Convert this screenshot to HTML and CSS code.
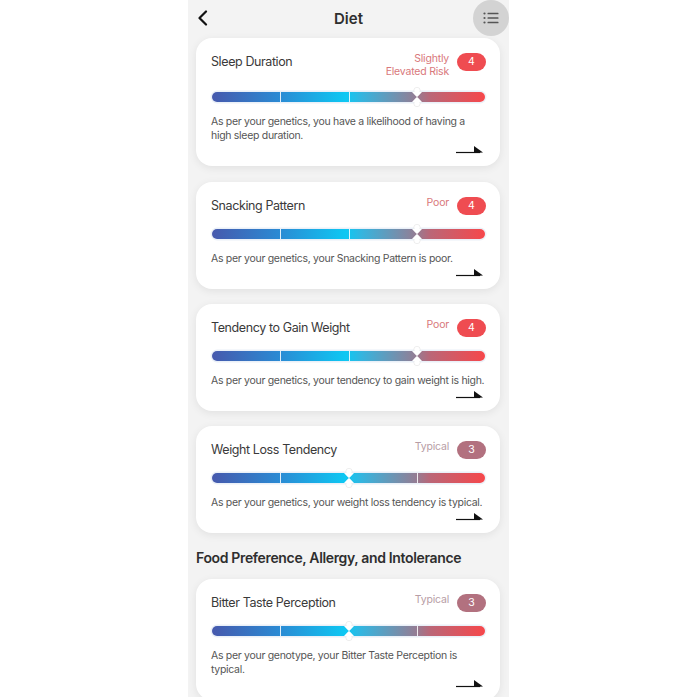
FILE: index.html
```html
<!DOCTYPE html>
<html>
<head>
<meta charset="utf-8">
<link rel="stylesheet" href="styles.css">
</head>
<body>
<div class="phone">
  <header class="topbar">
    <svg class="back" width="12" height="16" viewBox="0 0 12 16"><path d="M9 1.5 L2.5 8 L9 14.5" fill="none" stroke="#111" stroke-width="2.2" stroke-linecap="round" stroke-linejoin="round"/></svg>
    <div class="title">Diet</div>
    <div class="menu">
      <svg width="16" height="12" viewBox="0 0 16 12"><g fill="#555"><circle cx="1.5" cy="1.5" r="1.1"/><circle cx="1.5" cy="6" r="1.1"/><circle cx="1.5" cy="10.5" r="1.1"/><rect x="4.5" y="0.8" width="11" height="1.5" rx="0.5"/><rect x="4.5" y="5.25" width="11" height="1.5" rx="0.5"/><rect x="4.5" y="9.7" width="11" height="1.5" rx="0.5"/></g></svg>
    </div>
  </header>
  <main class="content">
    <section class="card">
      <div class="card-head">
        <div class="card-title">Sleep Duration</div>
        <div class="status">
          <div class="label label-risk">Slightly<br>Elevated Risk</div>
          <div class="badge badge-4">4</div>
        </div>
      </div>
      <div class="track">
        <span class="div" style="left:25%"></span>
        <span class="div" style="left:50%"></span>
        <span class="marker" style="left:75%"><svg width="12" height="20" viewBox="0 0 12 20"><g fill="#fff" stroke="#e2e2e2" stroke-width="0.6"><circle cx="6" cy="3.5" r="3.2"/><circle cx="6" cy="16.5" r="3.2"/></g><path d="M1 5 H11 L6.5 9.7 H5.5 Z M1 15 H11 L6.5 10.3 H5.5 Z" fill="#fff"/></svg></span>
      </div>
      <p class="desc">As per your genetics, you have a likelihood of having a<br>high sleep duration.</p>
      <div class="more"><svg width="28" height="9" viewBox="0 0 28 9"><path d="M0 7.5 H24" stroke="#111" stroke-width="1.2"/><path d="M18 1 L27 7.5 L18 8 Z" fill="#111"/></svg></div>
    </section>

    <section class="card">
      <div class="card-head">
        <div class="card-title">Snacking Pattern</div>
        <div class="status">
          <div class="label label-poor">Poor</div>
          <div class="badge badge-4">4</div>
        </div>
      </div>
      <div class="track">
        <span class="div" style="left:25%"></span>
        <span class="div" style="left:50%"></span>
        <span class="marker" style="left:75%"><svg width="12" height="20" viewBox="0 0 12 20"><g fill="#fff" stroke="#e2e2e2" stroke-width="0.6"><circle cx="6" cy="3.5" r="3.2"/><circle cx="6" cy="16.5" r="3.2"/></g><path d="M1 5 H11 L6.5 9.7 H5.5 Z M1 15 H11 L6.5 10.3 H5.5 Z" fill="#fff"/></svg></span>
      </div>
      <p class="desc">As per your genetics, your Snacking Pattern is poor.</p>
      <div class="more"><svg width="28" height="9" viewBox="0 0 28 9"><path d="M0 7.5 H24" stroke="#111" stroke-width="1.2"/><path d="M18 1 L27 7.5 L18 8 Z" fill="#111"/></svg></div>
    </section>

    <section class="card">
      <div class="card-head">
        <div class="card-title">Tendency to Gain Weight</div>
        <div class="status">
          <div class="label label-poor">Poor</div>
          <div class="badge badge-4">4</div>
        </div>
      </div>
      <div class="track">
        <span class="div" style="left:25%"></span>
        <span class="div" style="left:50%"></span>
        <span class="marker" style="left:75%"><svg width="12" height="20" viewBox="0 0 12 20"><g fill="#fff" stroke="#e2e2e2" stroke-width="0.6"><circle cx="6" cy="3.5" r="3.2"/><circle cx="6" cy="16.5" r="3.2"/></g><path d="M1 5 H11 L6.5 9.7 H5.5 Z M1 15 H11 L6.5 10.3 H5.5 Z" fill="#fff"/></svg></span>
      </div>
      <p class="desc">As per your genetics, your tendency to gain weight is high.</p>
      <div class="more"><svg width="28" height="9" viewBox="0 0 28 9"><path d="M0 7.5 H24" stroke="#111" stroke-width="1.2"/><path d="M18 1 L27 7.5 L18 8 Z" fill="#111"/></svg></div>
    </section>

    <section class="card">
      <div class="card-head">
        <div class="card-title">Weight Loss Tendency</div>
        <div class="status">
          <div class="label label-typical">Typical</div>
          <div class="badge badge-3">3</div>
        </div>
      </div>
      <div class="track">
        <span class="div" style="left:25%"></span>
        <span class="div" style="left:75%"></span>
        <span class="marker" style="left:50%"><svg width="12" height="20" viewBox="0 0 12 20"><g fill="#fff" stroke="#e2e2e2" stroke-width="0.6"><circle cx="6" cy="3.5" r="3.2"/><circle cx="6" cy="16.5" r="3.2"/></g><path d="M1 5 H11 L6.5 9.7 H5.5 Z M1 15 H11 L6.5 10.3 H5.5 Z" fill="#fff"/></svg></span>
      </div>
      <p class="desc">As per your genetics, your weight loss tendency is typical.</p>
      <div class="more"><svg width="28" height="9" viewBox="0 0 28 9"><path d="M0 7.5 H24" stroke="#111" stroke-width="1.2"/><path d="M18 1 L27 7.5 L18 8 Z" fill="#111"/></svg></div>
    </section>

    <h2 class="section-title">Food Preference, Allergy, and Intolerance</h2>

    <section class="card">
      <div class="card-head">
        <div class="card-title">Bitter Taste Perception</div>
        <div class="status">
          <div class="label label-typical">Typical</div>
          <div class="badge badge-3">3</div>
        </div>
      </div>
      <div class="track">
        <span class="div" style="left:25%"></span>
        <span class="div" style="left:75%"></span>
        <span class="marker" style="left:50%"><svg width="12" height="20" viewBox="0 0 12 20"><g fill="#fff" stroke="#e2e2e2" stroke-width="0.6"><circle cx="6" cy="3.5" r="3.2"/><circle cx="6" cy="16.5" r="3.2"/></g><path d="M1 5 H11 L6.5 9.7 H5.5 Z M1 15 H11 L6.5 10.3 H5.5 Z" fill="#fff"/></svg></span>
      </div>
      <p class="desc">As per your genotype, your Bitter Taste Perception is<br>typical.</p>
      <div class="more"><svg width="28" height="9" viewBox="0 0 28 9"><path d="M0 7.5 H24" stroke="#111" stroke-width="1.2"/><path d="M18 1 L27 7.5 L18 8 Z" fill="#111"/></svg></div>
    </section>
  </main>
</div>
</body>
</html>
```

FILE: styles.css
```css
* { box-sizing: border-box; }
html, body { margin: 0; padding: 0; background: #fff; }
body {
  font-family: Inter, "Noto Sans", "Liberation Sans", sans-serif;
  color: #333;
  height: 697px;
  overflow: hidden;
}
.phone {
  width: 321px;
  margin: 0 auto;
  background: #f3f3f3;
  height: 697px;
  overflow: hidden;
}
.topbar {
  height: 36px;
  display: flex;
  align-items: center;
  justify-content: space-between;
  padding: 0 0 0 9px;
  position: relative;
}
.back { display: block; }
.title {
  font-size: 15px;
  font-weight: 600;
  color: #2e2e2e;
  position: absolute;
  left: 0; right: 0;
  text-align: center;
  pointer-events: none;
}
.menu {
  width: 36px;
  height: 36px;
  border-radius: 50%;
  background: #d3d3d3;
  display: flex;
  align-items: center;
  justify-content: center;
}
.content {
  padding: 2px 9px 0 8px;
  display: flex;
  flex-direction: column;
}
.card {
  background: #fff;
  border-radius: 16px;
  box-shadow: 0 2px 8px rgba(0,0,0,0.08);
  padding: 13px 14px 11px 15px;
  margin-bottom: 15px;
}
.card:first-child { margin-bottom: 16px; }
.card-head {
  display: flex;
  justify-content: space-between;
  align-items: flex-start;
}
.card-title {
  font-size: 12.5px;
  letter-spacing: -0.4px;
  line-height: 18px;
  margin-top: 2px;
  color: #3a3a3a;
}
.status {
  display: flex;
  align-items: flex-start;
}
.label {
  font-size: 10.5px;
  letter-spacing: -0.2px;
  line-height: 13px;
  text-align: right;
  margin-right: 8px;
  margin-top: 1px;
}
.label-risk, .label-poor { color: #d9787b; }
.label-typical { color: #b79da5; }
.badge {
  width: 29px;
  height: 18px;
  border-radius: 9px;
  margin-top: 2px;
  color: #fff;
  font-size: 10.5px;
  line-height: 18px;
  text-align: center;
}
.badge-4 { background: #ef4c51; }
.badge-3 { background: #b2717f; }
.track {
  position: relative;
  height: 10px;
  margin: 14px 1px 0 1px;
  border-radius: 5px;
  background: linear-gradient(90deg, #4659ad 0%, #2a8bd4 25%, #0ec8f3 49%, #36b4de 55%, #957c93 75%, #bb6677 80%, #f6474b 100%);
  box-shadow: 0 0 0 1.5px #eaf0f8;
}
.div {
  position: absolute;
  top: 0;
  width: 1px;
  height: 10px;
  background: rgba(255,255,255,0.85);
}
.marker {
  position: absolute;
  top: -5px;
  width: 12px;
  height: 20px;
  margin-left: -6px;
}
.marker svg { display: block; }
.desc {
  margin: 13px 0 0 0;
  font-size: 10.5px;
  letter-spacing: -0.3px;
  line-height: 14px;
  color: #555;
}
.more {
  display: flex;
  justify-content: flex-end;
  margin-top: 2px;
  padding-right: 2px;
  height: 10px;
}
.more svg { display: block; }
.section-title {
  margin: 0 0 11px 0;
  font-size: 14px;
  letter-spacing: -0.35px;
  line-height: 20px;
  font-weight: 600;
  color: #2e2e2e;
}
```
